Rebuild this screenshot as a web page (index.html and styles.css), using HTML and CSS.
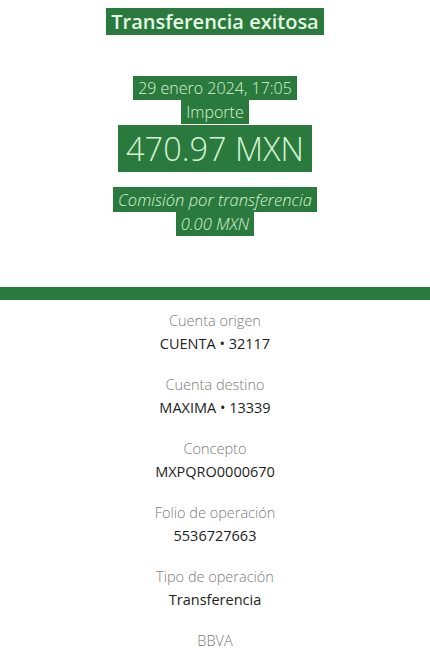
FILE: index.html
```html
<!DOCTYPE html>
<html lang="es">
<head>
<meta charset="utf-8">
<title>Transferencia exitosa</title>
<link rel="stylesheet" href="styles.css">
</head>
<body>
<header class="hero">
  <h1 class="title"><span class="hl">Transferencia exitosa</span></h1>
  <p class="date"><span class="hl">29 enero 2024, 17:05</span></p>
  <p class="label-amount"><span class="hl">Importe</span></p>
  <p class="amount"><span class="hl">470.97 MXN</span></p>
  <p class="fee"><span class="hl">Comisión por transferencia</span><br><span class="hl">0.00 MXN</span></p>
</header>
<div class="bar"></div>
<main class="details">
  <div class="item"><div class="lbl">Cuenta origen</div><div class="val">CUENTA • 32117</div></div>
  <div class="item"><div class="lbl">Cuenta destino</div><div class="val">MAXIMA • 13339</div></div>
  <div class="item"><div class="lbl">Concepto</div><div class="val">MXPQRO0000670</div></div>
  <div class="item"><div class="lbl">Folio de operación</div><div class="val">5536727663</div></div>
  <div class="item"><div class="lbl">Tipo de operación</div><div class="val">Transferencia</div></div>
  <div class="item"><div class="lbl">BBVA</div></div>
</main>
</body>
</html>
```
FILE: styles.css
```css
* { box-sizing: border-box; }
html, body { margin: 0; padding: 0; background: #fff; }
body {
  width: 430px;
  height: 661px;
  overflow: hidden;
  font-family: "Open Sans", "Liberation Sans", sans-serif;
  text-align: center;
}
.hero { padding-top: 10px; height: 287px; }
.hl {
  background: #2b7a3d;
  color: #d6f3d6;
  padding: 1px 5px;
  -webkit-box-decoration-break: clone;
  box-decoration-break: clone;
}
.title {
  margin: 0;
  font-size: 20px;
  font-weight: 600;
  line-height: 24px;
}
.title .hl { color: #e6f7e6; padding: 0 5px; }
.date {
  margin: 42px 0 0;
  font-size: 16px;
  font-weight: 300;
  line-height: 24px;
}
.label-amount {
  margin: 0;
  font-size: 16px;
  font-weight: 300;
  line-height: 24px;
}
.amount {
  margin: 2px 0 0;
  font-size: 32.5px;
  font-weight: 300;
  line-height: 46px;
}
.amount .hl { padding: 1px 8px; }
.fee {
  margin: 16px 0 0;
  font-size: 16.5px;
  font-weight: 300;
  font-style: italic;
  line-height: 24px;
}
.bar { height: 13px; background: #2b7a3d; }
.details {
  display: flex;
  flex-direction: column;
  gap: 17px;
  padding-top: 9px;
}
.item { display: flex; flex-direction: column; }
.lbl {
  font-size: 14.5px;
  font-weight: 300;
  color: #7a7a7a;
  line-height: 23px;
}
.val {
  font-size: 14.5px;
  font-weight: 400;
  color: #222;
  line-height: 24px;
}
```
